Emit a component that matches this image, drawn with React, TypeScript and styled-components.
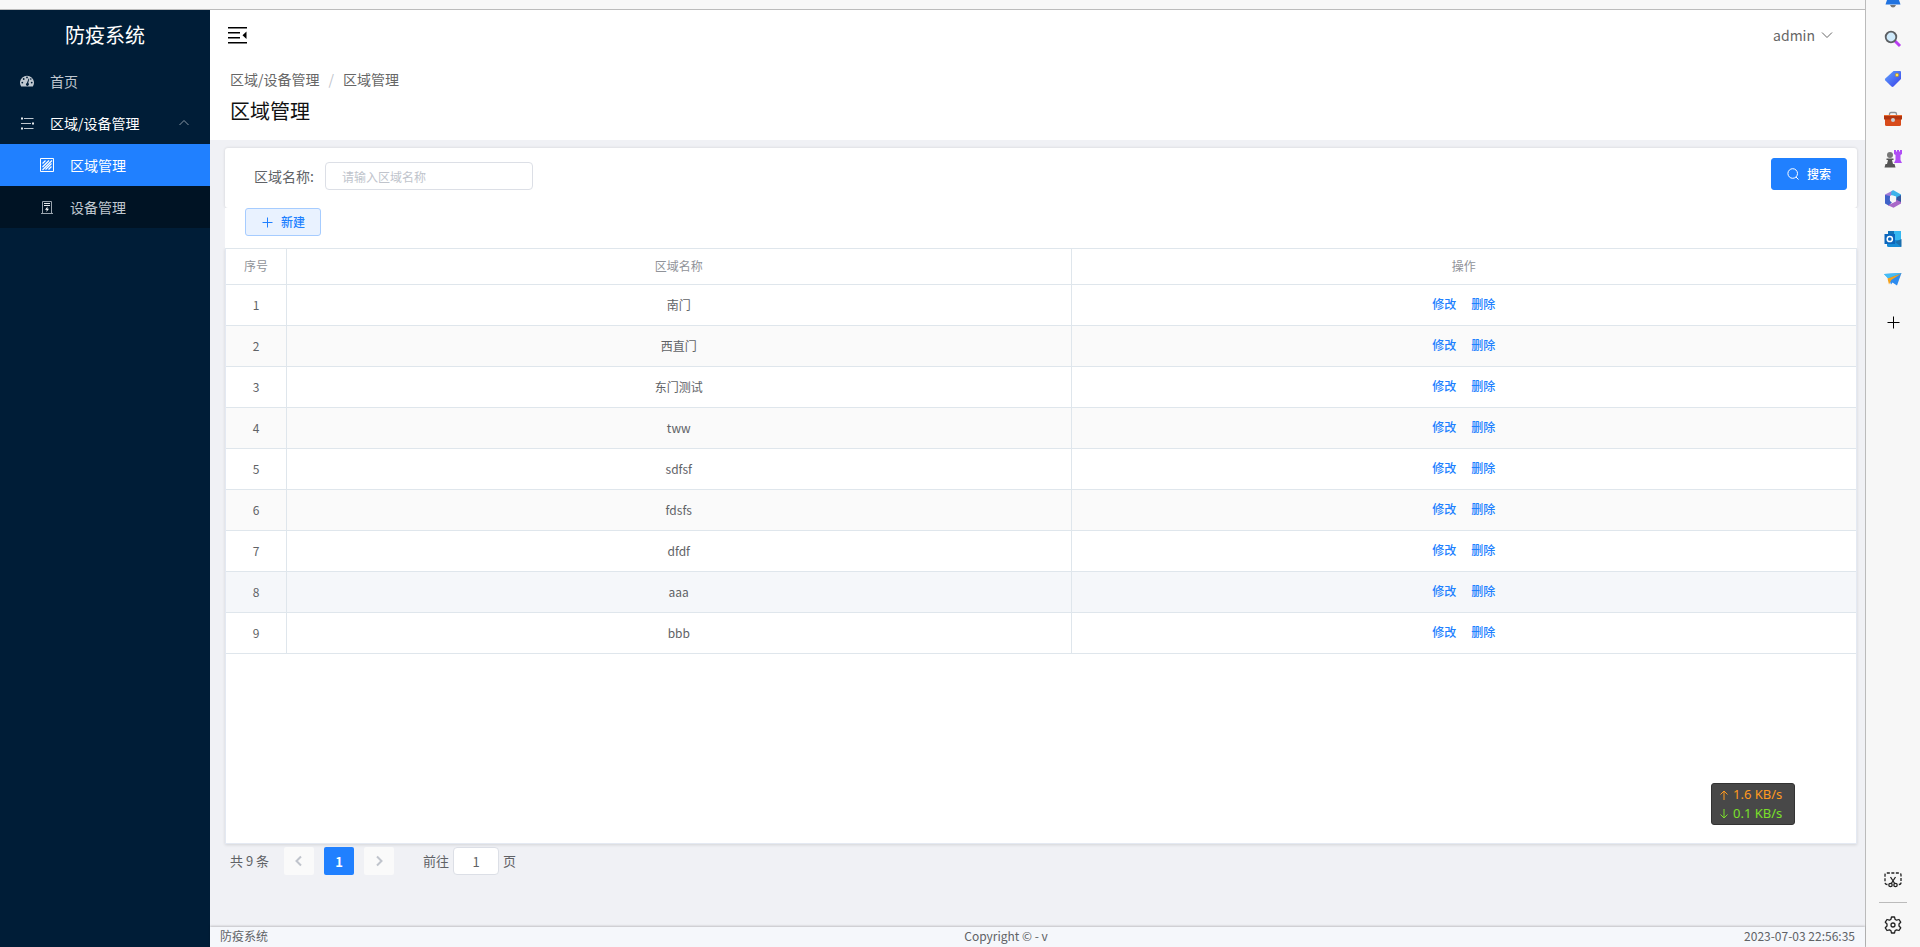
import React from 'react';
import styled, { createGlobalStyle } from 'styled-components';

const blue = '#2080ff';
const line = '#dfe6ec';
const grey = '#606266';

const GlobalStyle = createGlobalStyle`
  *, *::before, *::after { box-sizing: border-box; }
  body {
    margin: 0;
    font-family: "Noto Sans CJK SC", "Noto Sans", sans-serif;
    font-size: 14px;
    color: ${grey};
    background: #f7f7f7;
  }
  button, input { font-family: inherit; }
  button { cursor: pointer; margin: 0; }
  a { text-decoration: none; }
`;

const Shell = styled.div`
  display: flex;
  min-height: 100vh;
`;

const Viewport = styled.div`
  flex: 1;
  min-width: 0;
  display: flex;
  flex-direction: column;
  border-right: 1px solid #bbb;
`;

const TopStrip = styled.div`
  height: 10px;
  background: #f7f7f7;
  border-bottom: 1px solid #bbb;
`;

const Admin = styled.div`
  flex: 1;
  display: flex;
`;

const Sidebar = styled.aside`
  flex: none;
  width: 210px;
  background: #001d37;
`;

const Brand = styled.h1`
  margin: 0;
  height: 50px;
  line-height: 50px;
  font-size: 20px;
  font-weight: 400;
  text-align: center;
  color: #fff;
`;

const MenuItem = styled.a<{ $level?: number; $active?: boolean; $open?: boolean }>`
  display: flex;
  align-items: center;
  gap: 16px;
  height: 42px;
  padding: 0 20px 0 ${p => (p.$level === 2 ? 40 : 20)}px;
  color: ${p => (p.$active || p.$open ? '#fff' : '#c0c8d0')};
  background: ${p => (p.$active ? blue : p.$level === 2 ? '#001324' : 'transparent')};
  svg { flex: none; }
`;

const MenuText = styled.span`
  flex: 1;
`;

const Main = styled.div`
  flex: 1;
  min-width: 0;
  display: flex;
  flex-direction: column;
  background: #f0f1f5;
`;

const Header = styled.header`
  height: 50px;
  padding: 0 32px 0 17px;
  display: flex;
  align-items: center;
  justify-content: space-between;
  background: #fff;
`;

const PlainButton = styled.button`
  display: flex;
  align-items: center;
  gap: 6px;
  padding: 0;
  border: 0;
  background: none;
  font-size: 14px;
  line-height: 22px;
  color: #666;
`;

const Intro = styled.section`
  height: 80px;
  padding: 8px 20px;
  background: #fff;
`;

const Breadcrumb = styled.nav`
  display: flex;
  line-height: 22px;
  a { color: #666; }
  span { margin: 0 9px; color: #c0c4cc; }
`;

const PageTitle = styled.h2`
  margin: 6px 0 0;
  font-size: 20px;
  line-height: 30px;
  font-weight: 400;
  color: #111;
`;

const Content = styled.main`
  flex: 1;
  display: flex;
  flex-direction: column;
  padding: 8px 8px 0 15px;
`;

const SearchCard = styled.form`
  display: flex;
  justify-content: space-between;
  align-items: flex-start;
  height: 60px;
  padding: 10px 10px 0 29px;
  border-radius: 3px;
  background: #fff;
  box-shadow: 0 0 3px rgba(0, 0, 0, 0.14);
`;

const Field = styled.div`
  display: flex;
  align-items: center;
  gap: 11px;
  padding-top: 4px;
`;

const TextInput = styled.input`
  width: 208px;
  height: 28px;
  padding: 0 16px;
  border: 1px solid #dcdfe6;
  border-radius: 4px;
  background: #fff;
  font-size: 12px;
  color: ${grey};
  &::placeholder { color: #c0c4cc; }
`;

const ActionButton = styled.button<{ $plain?: boolean }>`
  display: flex;
  align-items: center;
  justify-content: center;
  gap: 8px;
  width: 76px;
  height: ${p => (p.$plain ? 28 : 32)}px;
  padding: 0;
  border: 1px solid ${p => (p.$plain ? '#a6ccff' : blue)};
  border-radius: 3px;
  background: ${p => (p.$plain ? '#e9f2ff' : blue)};
  color: ${p => (p.$plain ? blue : '#fff')};
  font-size: 12px;
  font-weight: 500;
  line-height: 16px;
`;

const Toolbar = styled.div`
  position: relative;
  height: 40px;
  padding: 0 20px;
  background: #fff;
`;

const TableBox = styled.div`
  flex: 1;
  border: 1px solid #e4e9f2;
  border-top-color: ${line};
  background: #fff;
  box-shadow: 0 1px 3px rgba(0, 0, 0, 0.12);
`;

const DataTable = styled.table`
  width: 100%;
  table-layout: fixed;
  border-collapse: separate;
  border-spacing: 0;
  font-size: 12px;
  text-align: center;
  th, td {
    padding: 0 0 2px;
    border-bottom: 1px solid ${line};
    border-right: 1px solid ${line};
  }
  th:last-child, td:last-child { border-right: 0; }
  th { height: 36px; font-weight: 400; color: #909399; }
  th:first-child { width: 61px; }
`;

const Row = styled.tr<{ $hover?: boolean }>`
  td { height: 41px; }
  &:nth-child(even) td { background: #fafafa; }
  &:nth-child(n) td { ${p => p.$hover && 'background: #f5f7fa;'} }
`;

const Actions = styled.div`
  display: flex;
  justify-content: center;
  gap: 15px;
`;

const TextButton = styled.button`
  padding: 0;
  border: 0;
  background: none;
  font-size: 12px;
  font-weight: 500;
  line-height: 16px;
  color: ${blue};
`;

const Pagination = styled.div`
  display: flex;
  align-items: flex-start;
  height: 83px;
  padding: 3px 5px 0;
  font-size: 13px;
  line-height: 28px;
`;

const Total = styled.span`
  margin-right: 15px;
`;

const PageButton = styled.button<{ $current?: boolean }>`
  display: flex;
  align-items: center;
  justify-content: center;
  width: 30px;
  height: 28px;
  margin-right: 10px;
  padding: 0;
  border: 0;
  border-radius: 2px;
  background: ${p => (p.$current ? blue : '#fafafa')};
  color: ${p => (p.$current ? '#fff' : '#c0c4cc')};
  font-size: 13px;
  font-weight: 700;
`;

const Jump = styled.label`
  display: flex;
  gap: 4px;
  margin-left: 19px;
`;

const PageInput = styled.input`
  width: 46px;
  height: 28px;
  padding: 0 3px;
  border: 1px solid #dcdfe6;
  border-radius: 4px;
  background: #fff;
  text-align: center;
  font-size: 13px;
  color: ${grey};
`;

const Footer = styled.footer`
  display: flex;
  justify-content: space-between;
  height: 20px;
  padding: 0 10px;
  font-size: 12px;
  line-height: 18px;
  background: #f5f7fb;
  box-shadow: 0 -1px 2px rgba(0, 0, 0, 0.2);
`;

const Rail = styled.nav`
  flex: none;
  width: 54px;
  display: flex;
  flex-direction: column;
  align-items: center;
  background: #f7f7f7;
`;

const RailButton = styled.button<{ $h?: number; $top?: boolean }>`
  display: flex;
  align-items: ${p => (p.$top ? 'flex-start' : 'center')};
  justify-content: center;
  width: 40px;
  height: ${p => p.$h ?? 40}px;
  padding: 0;
  border: 0;
  background: none;
  svg { display: block; }
`;

const RailSpace = styled.div`
  flex: 1;
`;

const RailDivider = styled.hr`
  width: 28px;
  height: 1px;
  margin: 2px 0 0;
  border: 0;
  background: #bbb;
`;

const SpeedWidget = styled.aside`
  position: fixed;
  right: 125px;
  bottom: 122px;
  width: 84px;
  height: 42px;
  padding: 1px 7px;
  border: 1px solid #333;
  border-radius: 3px;
  background: #484848;
  font-family: "Noto Sans", sans-serif;
  font-size: 13px;
  line-height: 19px;
`;

const Speed = styled.div<{ $color: string }>`
  display: flex;
  align-items: center;
  gap: 4px;
  white-space: nowrap;
  color: ${p => p.$color};
`;

const Stroke = ({ size = 14, box = 14, width = 1, d }: { size?: number; box?: number; width?: number; d: string }) => (
  <svg width={size} height={size} viewBox={`0 0 ${box} ${box}`} fill="none" stroke="currentColor" strokeWidth={width} aria-hidden="true">
    <path d={d} />
  </svg>
);

const GaugeIcon = () => (
  <svg width="14" height="14" viewBox="0 0 14 14" aria-hidden="true">
    <path d="M1.2 12.6A7 7 0 1 1 12.8 12.6Z" fill="#c0c8d0" />
    <g fill="#001d37">
      <circle cx="2.3" cy="8.6" r="0.9" />
      <circle cx="3.7" cy="5" r="0.9" />
      <circle cx="7" cy="3.4" r="0.9" />
      <circle cx="11.7" cy="8.6" r="0.9" />
      <circle cx="10.8" cy="5" r="0.8" />
      <path d="M8.6 4.4L9.3 4.7L8.2 9A1.5 1.5 0 1 1 6.9 8.9Z" />
    </g>
  </svg>
);

const TreeIcon = () => (
  <svg width="14" height="14" viewBox="0 0 14 14" aria-hidden="true">
    <path d="M4 2.5H13.5M1 7.5H11M4 12.5H13.5" stroke="#c0c8d0" />
    <path d="M1 1.5h2v2h-2zM12 6.5h2v2h-2zM1 11.5h2v2h-2z" fill="#e6eaee" />
  </svg>
);

const AreaIcon = () => (
  <svg width="14" height="14" viewBox="0 0 14 14" fill="none" stroke="#fff" aria-hidden="true">
    <path d="M.5 .5h13v13h-13z" />
    <path d="M2.5 5.5L5.5 2.5M2.5 9L9 2.5M2.5 12L12 2.5M5.5 11.5L11.5 5.5M8.5 11.5L11.5 8.5" strokeWidth="1.2" />
  </svg>
);

const DeviceIcon = () => (
  <svg width="14" height="14" viewBox="0 0 14 14" fill="none" stroke="#9aa4ae" aria-hidden="true">
    <path d="M2.5 13V1.5H11.5V13M1 13.5H13" />
    <path d="M4 3.5H10M4 5.5H10" stroke="#e6eaee" />
    <path d="M7.6 6.5L5 9.8H6.8L6.4 12L9 8.8H7.3Z" fill="#fff" stroke="none" />
  </svg>
);

const FoldIcon = () => (
  <svg width="20" height="20" viewBox="0 0 20 20" fill="#000" aria-hidden="true">
    <path d="M1 2h19v1.5h-19zM1 7h12v1.5h-12zM1 12h12v1.5h-12zM1 17h19v1.5h-19zM19.5 6.5v7.5l-4-3.7z" />
  </svg>
);

const BellIcon = () => (
  <svg width="18" height="8" viewBox="0 0 18 8" aria-hidden="true">
    <path d="M3 0H15L16.5 4.5H1.5Z" fill="#2173e0" />
    <path d="M6 5h6q-1 2.5-3 2.5t-3-2.5" fill="#777" />
  </svg>
);

const LensIcon = () => (
  <svg width="18" height="18" viewBox="0 0 18 18" aria-hidden="true">
    <path d="M11 11L16 16" stroke="#b93df2" strokeWidth="3" />
    <circle cx="7" cy="7" r="5.3" fill="#cfeafb" stroke="#5c5f63" strokeWidth="1.8" />
  </svg>
);

const TagIcon = () => (
  <svg width="18" height="18" viewBox="0 0 18 18" aria-hidden="true">
    <defs>
      <linearGradient id="tag" x1="0" y1="0" x2="1" y2="1">
        <stop offset="0" stopColor="#5ea4ff" /><stop offset="1" stopColor="#3b3fe8" />
      </linearGradient>
    </defs>
    <path d="M9.5 1H16Q17 1 17 2V9L9.5 16.5Q8.5 17.4 7.5 16.5L1.3 10.4Q.5 9.5 1.3 8.6Z" fill="url(#tag)" />
    <circle cx="13" cy="5" r="1.7" fill="#ffe15a" stroke="#b98e18" strokeWidth=".6" />
  </svg>
);

const ToolboxIcon = () => (
  <svg width="18" height="18" viewBox="0 0 18 18" aria-hidden="true">
    <path d="M5.5 6V4Q5.5 2.5 7 2.5H11Q12.5 2.5 12.5 4V6" fill="none" stroke="#8a8f94" strokeWidth="1.3" />
    <path d="M1 9H17V14.5Q17 16 15.5 16H2.5Q1 16 1 14.5Z" fill="#d84b1b" />
    <path d="M0 6Q0 5 1 5H17Q18 5 18 6V9.5H0Z" fill="#b2350f" />
    <path d="M0 5.5H18" stroke="#ea6a2c" />
    <circle cx="9" cy="10" r="2" fill="#c9cdd1" />
  </svg>
);

const ChessIcon = () => (
  <svg width="18" height="18" viewBox="0 0 18 18" aria-hidden="true">
    <path d="M10 0H12V1.5H13V0H15V1.5H16V0H18V4L16.5 5V10L18 13H10L11.5 10V5L10 4Z" fill="#b04df5" />
    <g fill="#555">
      <circle cx="6" cy="5" r="3" fill="#777" />
      <path d="M2.5 8.5H9.5V10H8L9 14H3L4 10H2.5ZM1.5 14H10.5L11.5 17.5H.5Z" />
    </g>
  </svg>
);

const OfficeIcon = () => (
  <svg width="18" height="18" viewBox="0 0 18 18" aria-hidden="true">
    <path d="M9 .5L1 4.5V13L6 10V6L11 3Z" fill="#a07bd8" />
    <path d="M1 5V13.5L5 15.8L8 12L6 10.5V6Z" fill="#3f62c8" />
    <path d="M7.5 1L9.5 .3L17 4.5V11L12 9V6.5L7 5Z" fill="#3db3ea" />
    <path d="M12 8.5L17 11V13.5L9.5 17.7L4 15.3L11.8 11.5Z" fill="#a868c8" />
    <path d="M13 7L17 5V12L12 9.5Z" fill="#3458a0" />
    <circle cx="9" cy="9" r="3.2" fill="#f7f7f7" />
  </svg>
);

const OutlookIcon = () => (
  <svg width="18" height="18" viewBox="0 0 18 18" aria-hidden="true">
    <path d="M4 1H17V10H4Z" fill="#35b8f1" />
    <path d="M4 1H10V6H4Z" fill="#1273b8" />
    <path d="M3 10H17V17H4.5Q3 17 3 15.5Z" fill="#168bd6" />
    <path d="M17.5 9V17L11 12Z" fill="#1b6fae" />
    <path d="M.5 4H11V14H.5Z" fill="#0b66bd" />
    <circle cx="5.8" cy="9" r="2.6" fill="none" stroke="#fff" strokeWidth="1.5" />
  </svg>
);

const PlaneIcon = () => (
  <svg width="18" height="18" viewBox="0 0 18 18" aria-hidden="true">
    <path d="M0 4L17.5 3L13 15.5L8.5 12.5L7 14.5L5 9Z" fill="#2d8cf0" />
    <path d="M0 4L17.5 3L4 8.5Z" fill="#44bdf5" />
    <path d="M17.5 3.5L3.5 8.5L5 14.5L7.3 10Z" fill="#f5a21c" />
  </svg>
);

const SnipIcon = () => (
  <svg width="18" height="18" viewBox="0 0 18 18" fill="none" stroke="#222" strokeWidth="1.3" aria-hidden="true">
    <path d="M3.5 13.5H3Q1 13.5 1 11.5V4Q1 2 3 2H15Q17 2 17 4V11.5Q17 13.5 15 13.5H14.5" strokeDasharray="3 1.5" />
    <path d="M6.5 6L10.7 12.5M11.5 6L7.3 12.5" />
    <circle cx="6.5" cy="14" r="1.7" /><circle cx="11.5" cy="14" r="1.7" />
  </svg>
);

const GearIcon = () => (
  <svg width="18" height="18" viewBox="0 0 18 18" fill="none" stroke="#222" strokeWidth="1.3" strokeLinejoin="round" aria-hidden="true">
    <path d="M7.5 1H10.5L11.1 3.4L12.6 4.2L15 3.5L16.7 6.2L15 8V10L16.7 11.8L15 14.5L12.6 13.8L11.1 14.6L10.5 17H7.5L6.9 14.6L5.4 13.8L3 14.5L1.3 11.8L3 10V8L1.3 6.2L3 3.5L5.4 4.2L6.9 3.4Z" />
    <circle cx="9" cy="9" r="2" />
  </svg>
);

const regions = ['南门', '西直门', '东门测试', 'tww', 'sdfsf', 'fdsfs', 'dfdf', 'aaa', 'bbb'];

const railTools = [
  { name: '搜索', icon: <LensIcon /> },
  { name: '购物', icon: <TagIcon /> },
  { name: '工具', icon: <ToolboxIcon /> },
  { name: '游戏', icon: <ChessIcon /> },
  { name: 'Microsoft 365', icon: <OfficeIcon /> },
  { name: 'Outlook', icon: <OutlookIcon /> },
  { name: 'Drop', icon: <PlaneIcon /> },
];

export default function App() {
  return (
    <>
      <GlobalStyle />
      <Shell>
        <Viewport>
          <TopStrip />
          <Admin>
            <Sidebar>
              <Brand>防疫系统</Brand>
              <nav>
                <MenuItem href="#home"><GaugeIcon /><MenuText>首页</MenuText></MenuItem>
                <MenuItem href="#area" $open>
                  <TreeIcon /><MenuText>区域/设备管理</MenuText>
                  <svg width="12" height="12" viewBox="0 0 12 12" fill="none" stroke="#8b98a5" aria-hidden="true"><path d="M1.5 8L6 3.5L10.5 8" /></svg>
                </MenuItem>
                <MenuItem href="#region" $level={2} $active><AreaIcon /><MenuText>区域管理</MenuText></MenuItem>
                <MenuItem href="#device" $level={2}><DeviceIcon /><MenuText>设备管理</MenuText></MenuItem>
              </nav>
            </Sidebar>
            <Main>
              <Header>
                <PlainButton type="button" aria-label="收起菜单"><FoldIcon /></PlainButton>
                <PlainButton type="button">admin<Stroke size={12} box={12} d="M1 3.5L6 8.5L11 3.5" /></PlainButton>
              </Header>
              <Intro>
                <Breadcrumb>
                  <a href="#area">区域/设备管理</a><span>/</span><a href="#region">区域管理</a>
                </Breadcrumb>
                <PageTitle>区域管理</PageTitle>
              </Intro>
              <Content>
                <SearchCard onSubmit={e => e.preventDefault()}>
                  <Field>
                    <label htmlFor="region-name">区域名称:</label>
                    <TextInput id="region-name" placeholder="请输入区域名称" />
                  </Field>
                  <ActionButton type="submit">
                    <Stroke size={12} box={12} d="M10.5 5.5A4.8 4.8 0 1 1 .9 5.5A4.8 4.8 0 1 1 10.5 5.5M9 9L11.5 11.5" />搜索
                  </ActionButton>
                </SearchCard>
                <Toolbar>
                  <ActionButton type="button" $plain>
                    <Stroke size={12} box={12} d="M6.5 1.5V11.5M1.5 6.5H11.5" />新建
                  </ActionButton>
                </Toolbar>
                <TableBox>
                  <DataTable>
                    <thead>
                      <tr><th scope="col">序号</th><th scope="col">区域名称</th><th scope="col">操作</th></tr>
                    </thead>
                    <tbody>
                      {regions.map((name, i) => (
                        <Row key={name} $hover={i === 7}>
                          <td>{i + 1}</td>
                          <td>{name}</td>
                          <td>
                            <Actions>
                              <TextButton type="button">修改</TextButton>
                              <TextButton type="button">删除</TextButton>
                            </Actions>
                          </td>
                        </Row>
                      ))}
                    </tbody>
                  </DataTable>
                </TableBox>
                <Pagination>
                  <Total>共 9 条</Total>
                  <PageButton type="button" aria-label="上一页"><Stroke size={12} box={12} width={2} d="M8 1.5L3.5 6L8 10.5" /></PageButton>
                  <PageButton type="button" $current>1</PageButton>
                  <PageButton type="button" aria-label="下一页"><Stroke size={12} box={12} width={2} d="M4 1.5L8.5 6L4 10.5" /></PageButton>
                  <Jump>前往<PageInput defaultValue="1" />页</Jump>
                </Pagination>
              </Content>
              <Footer>
                <span>防疫系统</span><span>Copyright © - v</span><span>2023-07-03 22:56:35</span>
              </Footer>
            </Main>
          </Admin>
        </Viewport>
        <Rail>
          <RailButton type="button" $h={19} $top aria-label="通知"><BellIcon /></RailButton>
          {railTools.map(t => (
            <RailButton key={t.name} type="button" aria-label={t.name}>{t.icon}</RailButton>
          ))}
          <RailButton type="button" $h={47} aria-label="添加"><Stroke size={13} box={13} d="M6.5 .5V12.5M.5 6.5H12.5" /></RailButton>
          <RailSpace />
          <RailButton type="button" aria-label="截图"><SnipIcon /></RailButton>
          <RailDivider />
          <RailButton type="button" $h={44} aria-label="设置"><GearIcon /></RailButton>
        </Rail>
      </Shell>
      <SpeedWidget>
        <Speed $color="#ff9a1f"><Stroke size={10} box={10} d="M5 10V1M1.5 4.5L5 1L8.5 4.5" />1.6 KB/s</Speed>
        <Speed $color="#7be02a"><Stroke size={10} box={10} d="M5 0V9M1.5 5.5L5 9L8.5 5.5" />0.1 KB/s</Speed>
      </SpeedWidget>
    </>
  );
}
